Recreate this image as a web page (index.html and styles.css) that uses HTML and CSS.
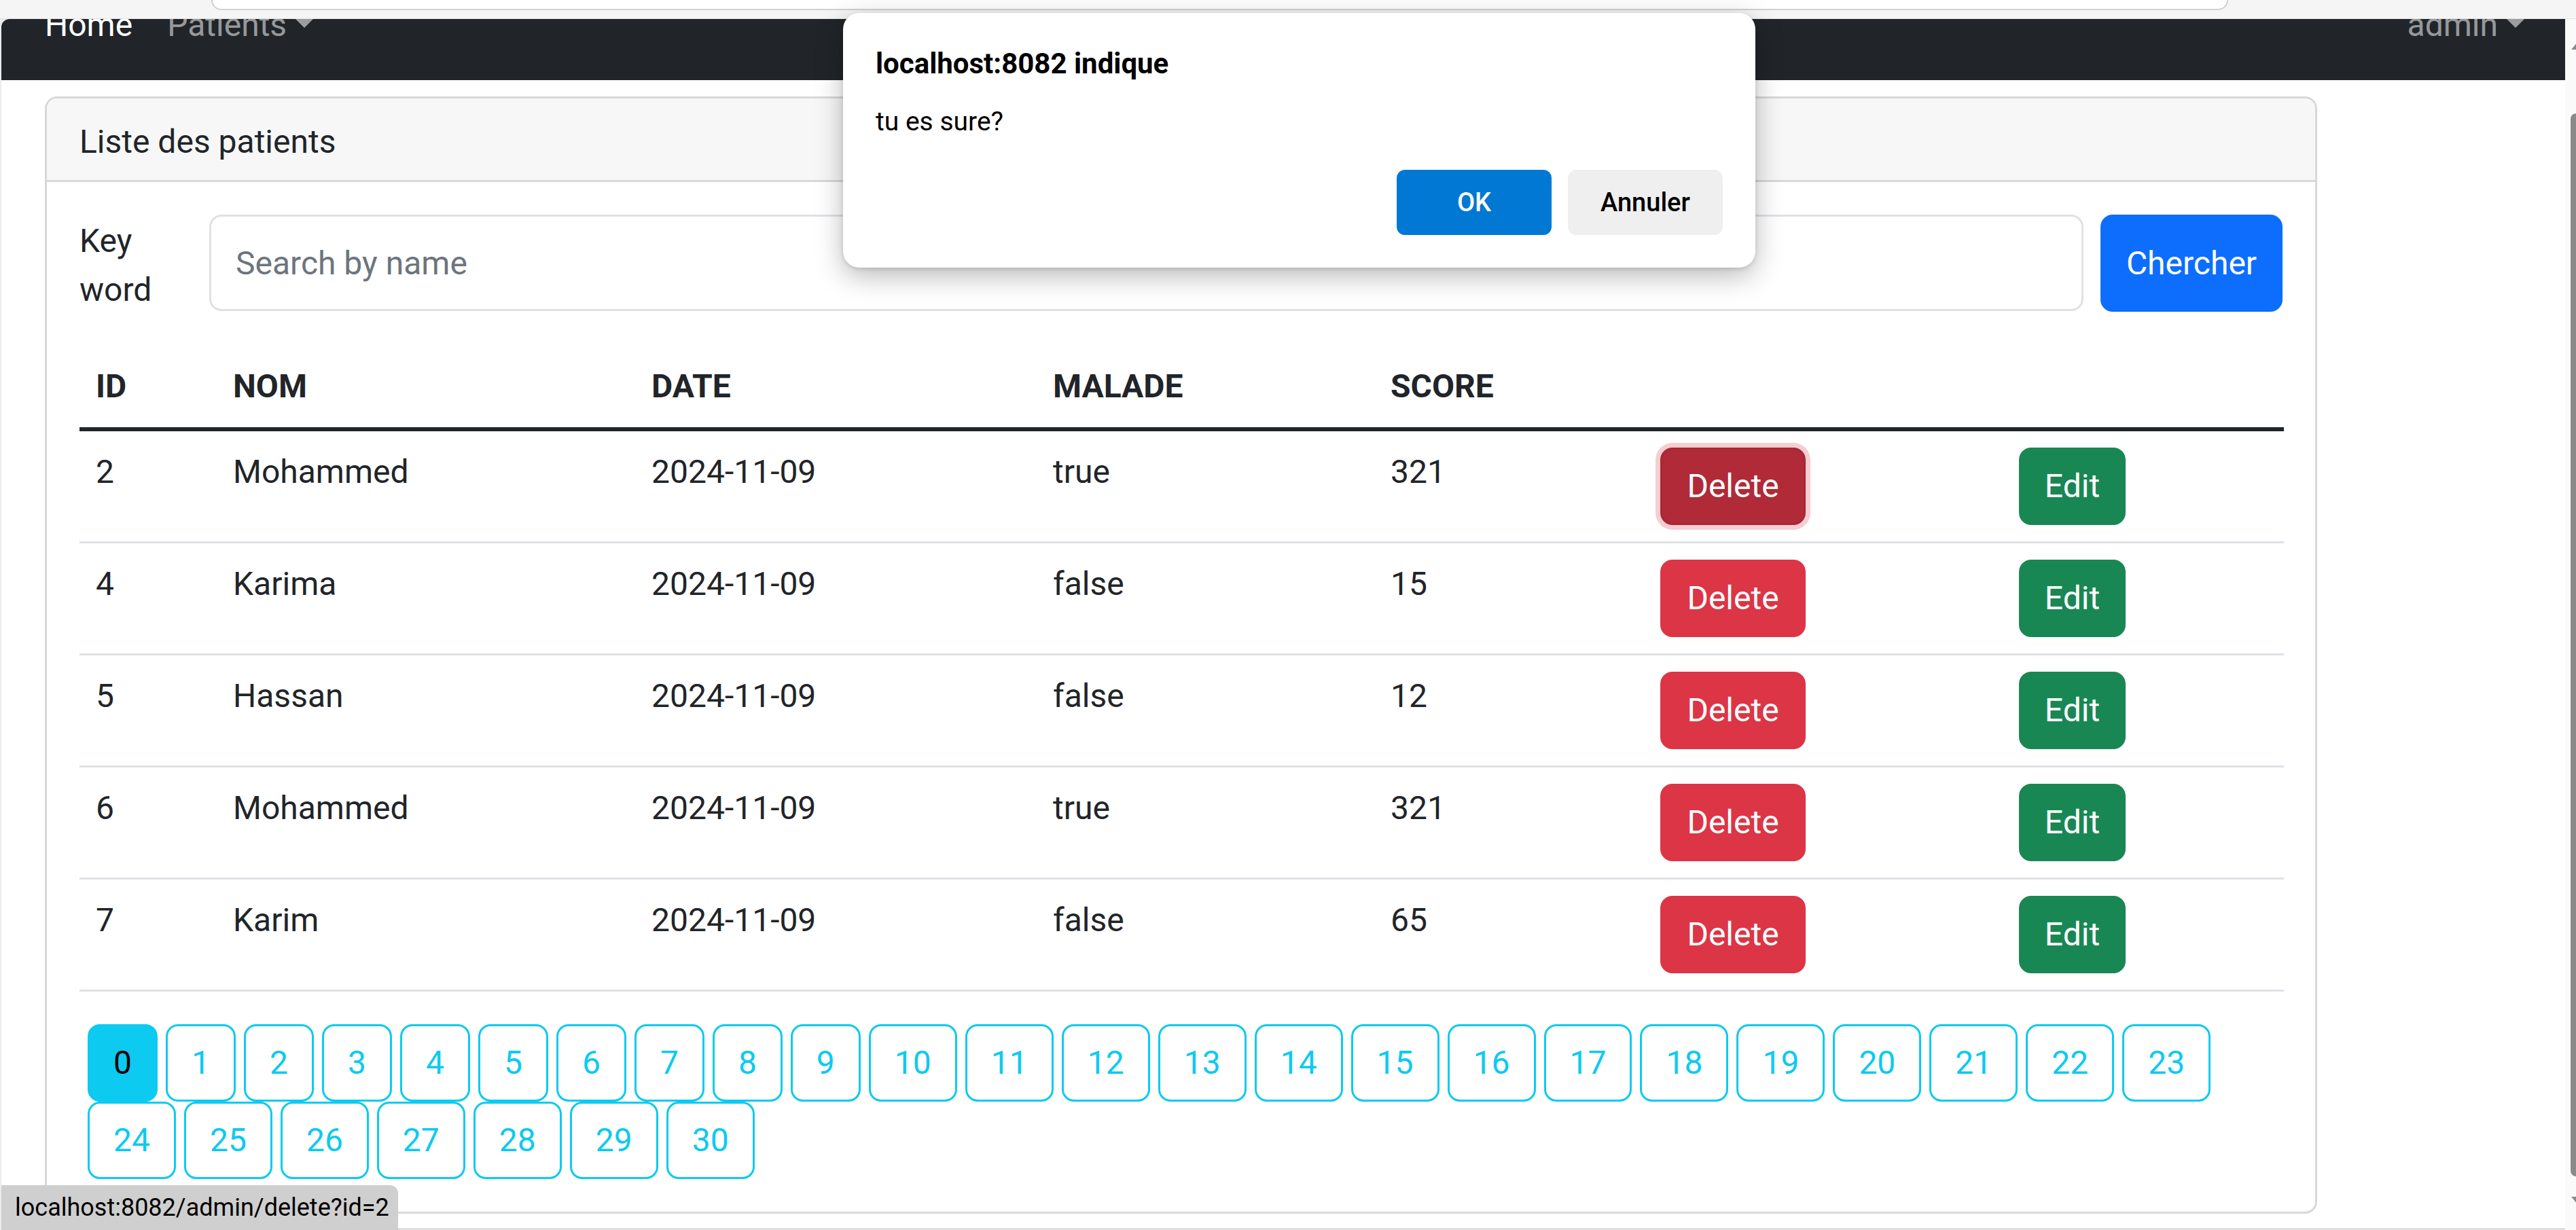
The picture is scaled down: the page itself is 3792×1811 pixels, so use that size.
FILE: index.html
```html
<!DOCTYPE html>
<html lang="fr">
<head>
<meta charset="utf-8">
<title>Patients</title>
<link rel="stylesheet" href="styles.css">
</head>
<body>
<div class="chrome"><div class="addr"></div></div>
<div class="window">
  <div class="viewport">
    <nav class="navbar">
      <div class="nav-inner">
        <ul class="nav-left">
          <li class="nav-link active">Home</li>
          <li class="nav-link toggle">Patients</li>
        </ul>
        <div class="nav-link toggle">admin</div>
      </div>
    </nav>
    <main class="content">
      <section class="card">
        <header class="card-header">Liste des patients</header>
        <div class="card-body">
          <form class="search-row">
            <label class="search-label" for="kw">Key word</label>
            <input class="search-input" id="kw" type="text" placeholder="Search by name">
            <button class="btn btn-primary" type="button">Chercher</button>
          </form>
          <table class="table">
            <colgroup>
              <col class="c-id"><col class="c-nom"><col class="c-date"><col class="c-malade"><col class="c-score"><col class="c-del"><col class="c-edit">
            </colgroup>
            <thead>
              <tr><th>ID</th><th>NOM</th><th>DATE</th><th>MALADE</th><th>SCORE</th><th></th><th></th></tr>
            </thead>
            <tbody>
              <tr><td>2</td><td>Mohammed</td><td>2024-11-09</td><td>true</td><td>321</td><td><a class="btn btn-danger focused">Delete</a></td><td><a class="btn btn-success">Edit</a></td></tr>
              <tr><td>4</td><td>Karima</td><td>2024-11-09</td><td>false</td><td>15</td><td><a class="btn btn-danger">Delete</a></td><td><a class="btn btn-success">Edit</a></td></tr>
              <tr><td>5</td><td>Hassan</td><td>2024-11-09</td><td>false</td><td>12</td><td><a class="btn btn-danger">Delete</a></td><td><a class="btn btn-success">Edit</a></td></tr>
              <tr><td>6</td><td>Mohammed</td><td>2024-11-09</td><td>true</td><td>321</td><td><a class="btn btn-danger">Delete</a></td><td><a class="btn btn-success">Edit</a></td></tr>
              <tr><td>7</td><td>Karim</td><td>2024-11-09</td><td>false</td><td>65</td><td><a class="btn btn-danger">Delete</a></td><td><a class="btn btn-success">Edit</a></td></tr>
            </tbody>
          </table>
          <ul class="pager">
            <li><a class="pg active">0</a></li>
            <li><a class="pg">1</a></li>
            <li><a class="pg">2</a></li>
            <li><a class="pg">3</a></li>
            <li><a class="pg">4</a></li>
            <li><a class="pg">5</a></li>
            <li><a class="pg">6</a></li>
            <li><a class="pg">7</a></li>
            <li><a class="pg">8</a></li>
            <li><a class="pg">9</a></li>
            <li><a class="pg">10</a></li>
            <li><a class="pg">11</a></li>
            <li><a class="pg">12</a></li>
            <li><a class="pg">13</a></li>
            <li><a class="pg">14</a></li>
            <li><a class="pg">15</a></li>
            <li><a class="pg">16</a></li>
            <li><a class="pg">17</a></li>
            <li><a class="pg">18</a></li>
            <li><a class="pg">19</a></li>
            <li><a class="pg">20</a></li>
            <li><a class="pg">21</a></li>
            <li><a class="pg">22</a></li>
            <li><a class="pg">23</a></li>
            <li><a class="pg">24</a></li>
            <li><a class="pg">25</a></li>
            <li><a class="pg">26</a></li>
            <li><a class="pg">27</a></li>
            <li><a class="pg">28</a></li>
            <li><a class="pg">29</a></li>
            <li><a class="pg">30</a></li>
          </ul>
        </div>
      </section>
    </main>
  </div>
  <div class="scrollbar">
    <span class="arrow-up"></span>
    <span class="thumb"></span>
    <span class="arrow-down"></span>
  </div>
</div>

<div class="dialog" role="alertdialog">
  <div class="dialog-title">localhost:8082 indique</div>
  <div class="dialog-msg">tu es sure?</div>
  <div class="dialog-actions">
    <button class="dbtn dbtn-ok" type="button">OK</button>
    <button class="dbtn dbtn-cancel" type="button">Annuler</button>
  </div>
</div>

<div class="status">localhost:8082/admin/delete?id=2</div>
</body>
</html>
```

FILE: styles.css
```css
* { box-sizing: border-box; }

html, body {
  margin: 0;
  padding: 0;
}

body {
  width: 3792px;
  height: 1811px;
  overflow: hidden;
  background: #ececec;
  font-family: "Segoe UI", Roboto, "Noto Sans", sans-serif;
  color: #212529;
  position: relative;
}

/* browser chrome sliver */
.chrome {
  height: 28px;
  background: #f5f5f5;
  border-bottom: 1px solid #e4e4e4;
}
.addr {
  margin-left: 311px;
  width: 2969px;
  height: 15px;
  background: #fff;
  border: 2px solid #d0d0d0;
  border-top: 0;
  border-radius: 0 0 30px 30px;
}

.window {
  display: flex;
  height: 1783px;
  margin-left: 2px;
}

.viewport {
  flex: 1;
  background: #fff;
  border-top-left-radius: 12px;
  overflow: hidden;
  border-bottom: 3px solid #dedede;
}

/* navbar */
.navbar {
  height: 90px;
  background: #212529;
  overflow: hidden;
}
.nav-inner {
  margin-top: -27px;
  display: flex;
  justify-content: space-between;
  padding: 0 59px 0 64px;
  font-size: 48px;
  line-height: 72px;
}
.nav-left {
  display: flex;
  gap: 51px;
  list-style: none;
  margin: 0;
  padding: 0;
}
.nav-link {
  color: rgba(255, 255, 255, 0.55);
}
.nav-link.active {
  color: #fff;
}
.toggle::after {
  content: "";
  display: inline-block;
  margin-left: 12px;
  vertical-align: 12px;
  border-top: 14px solid;
  border-left: 14px solid transparent;
  border-right: 14px solid transparent;
}

/* content */
.content {
  padding: 24px 0 0 64px;
}

.card {
  width: 3345px;
  border: 3px solid #d8d8d8;
  border-radius: 18px;
  overflow: hidden;
  font-size: 48px;
  line-height: 72px;
}
.card-header {
  background: #f7f7f7;
  border-bottom: 3px solid #d8d8d8;
  padding: 28px 48px 20px;
}
.card-body {
  padding: 48px 48px 48px;
}

.search-row {
  display: flex;
  align-items: flex-start;
  margin: 0;
}
.search-label {
  width: 167px;
  margin-right: 24px;
  padding-top: 3px;
}
.search-input {
  flex: 1;
  height: 142px;
  border: 3px solid #dee2e6;
  border-radius: 18px;
  padding: 0 36px;
  font: inherit;
  color: #212529;
  outline: none;
}
.search-input::placeholder {
  color: #6c757d;
}

.btn {
  display: inline-block;
  font: inherit;
  line-height: 108px;
  height: 114px;
  padding: 0 36px;
  border: 3px solid transparent;
  border-radius: 18px;
  color: #fff;
  text-align: center;
  text-decoration: none;
}
.btn-primary {
  background: #0d6efd;
  border-color: #0d6efd;
  width: 268px;
  height: 143px;
  line-height: 137px;
  margin-left: 25px;
  padding: 0;
}
.btn-danger {
  background: #dc3545;
  border-color: #dc3545;
  width: 214px;
  padding: 0;
}
.btn-danger.focused {
  background: #b02a37;
  border-color: #a52834;
  box-shadow: 0 0 0 7px #f6cdd1;
}
.btn-success {
  background: #198754;
  border-color: #198754;
  width: 157px;
  padding: 0;
}

/* table */
.table {
  width: 100%;
  margin-top: 46px;
  margin-bottom: 48px;
  border-collapse: collapse;
  table-layout: fixed;
}
.c-id { width: 202px; }
.c-nom { width: 616px; }
.c-date { width: 591px; }
.c-malade { width: 497px; }
.c-score { width: 397px; }
.c-del { width: 528px; }
.c-edit { width: 414px; }

.table th,
.table td {
  padding: 24px;
  text-align: left;
  vertical-align: top;
}
.table th {
  font-weight: 700;
  border-bottom: 6px solid #212529;
}
.table td {
  border-bottom: 3px solid #dee2e6;
}

/* pagination */
.pager {
  display: flex;
  flex-wrap: wrap;
  column-gap: 12px;
  row-gap: 0;
  list-style: none;
  margin: 0;
  padding: 0 0 0 12px;
}
.pg {
  display: block;
  height: 114px;
  line-height: 108px;
  padding: 0 35px;
  border: 3px solid #0dcaf0;
  border-radius: 18px;
  color: #0dcaf0;
  background: #fff;
}
.pg.active {
  background: #0dcaf0;
  color: #000;
}

/* scrollbar */
.scrollbar {
  width: 16px;
  background: #fafafa;
  position: relative;
}
.arrow-up {
  position: absolute;
  left: 9px;
  top: 33px;
  border-bottom: 12px solid #8a8a8a;
  border-left: 10px solid transparent;
  border-right: 10px solid transparent;
}
.thumb {
  position: absolute;
  left: 8px;
  top: 139px;
  width: 16px;
  height: 1565px;
  background: #8a8a8a;
  border-radius: 10px;
}
.arrow-down {
  position: absolute;
  left: 9px;
  top: 1734px;
  border-top: 12px solid #8a8a8a;
  border-left: 10px solid transparent;
  border-right: 10px solid transparent;
}

/* alert dialog */
.dialog {
  position: absolute;
  left: 1241px;
  top: 19px;
  width: 1343px;
  padding: 50px 48px 48px;
  background: #fff;
  border-radius: 24px;
  box-shadow: 0 12px 40px rgba(0, 0, 0, 0.28), 0 2px 6px rgba(0, 0, 0, 0.12);
  color: #000;
}
.dialog-title {
  font-size: 42px;
  line-height: 50px;
  font-weight: 700;
}
.dialog-msg {
  margin-top: 37px;
  font-size: 39px;
  line-height: 47px;
}
.dialog-actions {
  margin-top: 47px;
  display: flex;
  justify-content: flex-end;
  gap: 24px;
}
.dbtn {
  width: 228px;
  height: 96px;
  border: 0;
  border-radius: 12px;
  font-family: inherit;
  font-size: 38px;
  font-weight: 500;
}
.dbtn-ok {
  background: #0078d4;
  color: #fff;
}
.dbtn-cancel {
  background: #efefef;
  color: #000;
}

/* status bubble */
.status {
  position: absolute;
  left: 2px;
  top: 1745px;
  width: 584px;
  height: 66px;
  padding-left: 20px;
  background: #cfcfcf;
  border-top-right-radius: 12px;
  font-size: 36px;
  line-height: 66px;
  color: #000;
  white-space: nowrap;
}
```
